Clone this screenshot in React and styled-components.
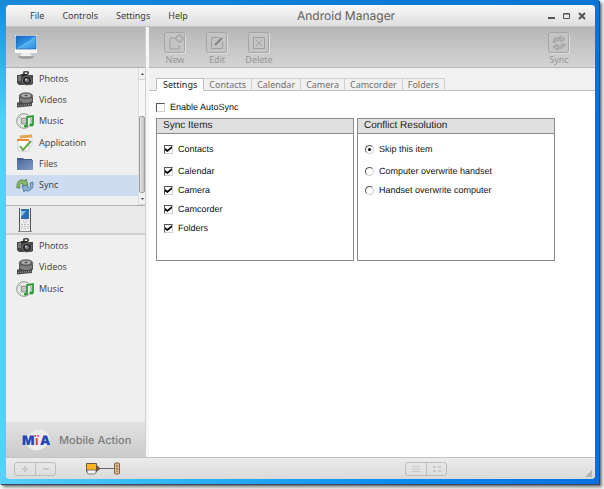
import { useState } from 'react';
import styled, { createGlobalStyle } from 'styled-components';

const GlobalStyle = createGlobalStyle`
    * {
        box-sizing: border-box;
    }

    body {
        margin: 0;
        background: #f4f4f4;
        overflow: hidden;
    }

    button, input {
        margin: 0;
        padding: 0;
        font: inherit;
        color: inherit;
    }
`;

const Screen = styled.div`
    height: 100vh;
    padding: 0 5px 5px 0;
`;

const Desktop = styled.div`
    height: 100%;
    padding: 5px 4px 5px 6px;
    background:
        linear-gradient(to bottom, rgba(10, 118, 208, 0.8), rgba(10, 118, 208, 0) 120px),
        linear-gradient(to right, #58d0f8, #2cb4f5 30%, #0c8cf0 65%, #0670e0);
    box-shadow: 1px 1px 1px #3c4858, 3px 3px 3px #777;
`;

const Window = styled.div`
    height: 100%;
    display: flex;
    flex-direction: column;
    border-radius: 4px;
    overflow: hidden;
    background: #f0f0f0;
    color: #3c3c3c;
    font-family: "Open Sans", "Noto Sans", sans-serif;
    font-size: 9px;
    line-height: 14px;
    text-rendering: geometricPrecision;
`;

const TitleBar = styled.header`
    height: 22px;
    flex: none;
    display: grid;
    grid-template-columns: 267px 1fr auto;
    align-items: center;
    padding: 0 8px 0 24px;
    background: linear-gradient(#f8f8f8, #dedede);
    border-bottom: 1px solid #c4c4c4;
`;

const Menu = styled.nav`
    display: flex;
    gap: 18px;
    font-family: "Noto Sans", sans-serif;
`;

const MenuButton = styled.button`
    border: 0;
    background: none;
`;

const Title = styled.h1`
    margin: 0;
    color: #626262;
    font-family: Inter, sans-serif;
    font-size: 12px;
    font-weight: 400;
    line-height: 16px;
`;

const WindowButtons = styled.div`
    display: flex;
    justify-content: flex-end;
    gap: 5px;
`;

const WindowButton = styled.button`
    width: 10px;
    height: 10px;
    display: flex;
    border: 0;
    background: none;
`;

const Body = styled.div`
    flex: 1;
    min-height: 0;
    display: grid;
    grid-template-columns: 140px 1fr;
    column-gap: 3px;
    background: #f6f6f6;
`;

const Sidebar = styled.aside`
    min-height: 0;
    display: flex;
    flex-direction: column;
    background: #efefef;
    border-right: 1px solid #d0d0d0;
`;

const ComputerHeader = styled.div`
    height: 41px;
    flex: none;
    display: flex;
    align-items: center;
    padding-left: 8px;
    background: linear-gradient(#b6b6b6, #d2d2d2);
    border-bottom: 1px solid #b0b0b0;
`;

const ScrollArea = styled.div`
    height: 137px;
    flex: none;
    display: flex;
`;

const List = styled.div`
    height: ${props => (props.$short ? '64px' : '128px')};
    flex: ${props => (props.$short ? 'none' : '1')};
    display: flex;
    flex-direction: column;
    justify-content: space-between;
`;

const ListItem = styled.button`
    height: 21px;
    display: flex;
    align-items: center;
    gap: 5px;
    padding-left: 10px;
    border: 0;
    background: ${props => (props.$active ? '#cddcf0' : 'none')};
    text-align: left;
`;

const ScrollBar = styled.div`
    width: 7px;
    display: flex;
    flex-direction: column;
    border-left: 1px solid #dcdcdc;
    background: #f6f6f6;
`;

const ScrollButton = styled.button`
    height: 12px;
    display: flex;
    align-items: center;
    justify-content: center;
    border: 0;
    border-bottom: 1px solid #d4d4d4;
    background: #f2f2f2;
`;

const ScrollTrack = styled.div`
    flex: 1;
    display: flex;
    align-items: flex-end;
`;

const ScrollThumb = styled.div`
    width: 100%;
    height: 68%;
    border: 1px solid #a0a0a0;
    border-radius: 2px;
    background: linear-gradient(to right, #e2e2e2, #c4c4c4);
`;

const DeviceHeader = styled.div`
    height: 30px;
    flex: none;
    display: flex;
    align-items: center;
    padding-left: 12px;
    background: #e9e9e9;
    border-top: 1px solid #b0b0b0;
    border-bottom: 2px solid #d0d0d0;
`;

const Brand = styled.div`
    height: 35px;
    flex: none;
    display: flex;
    align-items: center;
    gap: 5px;
    margin-top: auto;
    padding-left: 16px;
    background: linear-gradient(#e2e2e2, #cbcbcb);
    color: #7c7c7c;
    font-family: Inter, sans-serif;
    font-size: 11px;
    font-weight: 500;
`;

const Main = styled.main`
    min-width: 0;
    display: flex;
    flex-direction: column;
    background: #fff;
`;

const Toolbar = styled.div`
    height: 41px;
    flex: none;
    display: flex;
    gap: 12px;
    padding: 5px 21px 0 11px;
    background: linear-gradient(#b6b6b6, #d4d4d4);
    border-bottom: 1px solid #b8b8b8;
`;

const ToolButton = styled.button`
    width: 30px;
    display: flex;
    flex-direction: column;
    align-items: center;
    margin-left: ${props => (props.$last ? 'auto' : '0')};
    border: 0;
    background: none;
    color: #969696;
    font-family: "Noto Sans", sans-serif;
    line-height: 12px;
`;

const Tabs = styled.div`
    height: 23px;
    flex: none;
    display: flex;
    align-items: flex-end;
    padding-left: 7px;
    background: #f1f1f1;
    box-shadow: inset 0 -1px #c0c0c0;
`;

const Tab = styled.button`
    height: 13px;
    padding: 0 ${props => (props.$active ? '6px' : '5px')};
    border: 1px solid ${props => (props.$active ? '#bcbcbc' : '#cfcfcf')};
    border-bottom-color: ${props => (props.$active ? '#fff' : '#c0c0c0')};
    border-left-width: ${props => (props.$active ? '1px' : '0')};
    background: ${props => (props.$active ? '#fff' : '#f1f1f1')};
    color: ${props => (props.$active ? '#222' : '#707070')};
    font-family: "Noto Sans", sans-serif;
    line-height: 12px;
`;

const Content = styled.div`
    flex: 1;
    padding: 9px 40px 0 7px;
    color: #111;
    font-family: "Liberation Sans", Arial, sans-serif;
`;

const Panels = styled.div`
    display: grid;
    grid-template-columns: 1fr 1fr;
    gap: 3px;
    margin-top: 4px;
`;

const Panel = styled.fieldset`
    min-width: 0;
    min-height: 143px;
    margin: 0;
    padding: 0;
    border: 1px solid #8c8c8c;
`;

const PanelTitle = styled.h2`
    margin: 0;
    padding-left: 6px;
    background: #e0e0e0;
    border-bottom: 1px solid #8c8c8c;
    color: #222;
    font-size: 10px;
    font-weight: 400;
`;

const Options = styled.div`
    display: flex;
    flex-direction: column;
    gap: 5px;
    padding: 8px 7px;
`;

const Option = styled.label`
    display: flex;
    align-items: center;
    gap: 5px;
    margin-bottom: ${props => (props.$lead ? '3px' : '0')};
`;

const CheckBox = styled.input`
    appearance: none;
    width: 9px;
    height: 9px;
    display: grid;
    place-items: center;
    border: 1px solid #d0d0d0;
    border-top-color: #555;
    border-left-color: #555;
    background: #fff;

    &:checked::after {
        content: "";
        width: 7px;
        height: 6px;
        background: #000;
        clip-path: polygon(0 35%, 35% 62%, 100% 0, 100% 38%, 35% 100%, 0 75%);
    }
`;

const Radio = styled(CheckBox)`
    border-radius: 50%;

    &:checked::after {
        width: 3px;
        height: 3px;
        border-radius: 50%;
        clip-path: none;
    }
`;

const StatusBar = styled.footer`
    height: 22px;
    flex: none;
    display: grid;
    grid-template-columns: 72px 319px 1fr auto;
    align-items: center;
    padding: 0 2px 0 8px;
    background: linear-gradient(#ececec, #dadada);
    border-top: 1px solid #c2c2c2;
`;

const ButtonPair = styled.div`
    display: flex;
    justify-self: start;
    border: 1px solid #bdbdbd;
    border-radius: 3px;
`;

const SmallButton = styled.button`
    width: 20px;
    height: 12px;
    display: grid;
    place-items: center;
    border: 0;
    background: none;
    color: #cacaca;

    & + & {
        border-left: 1px solid #bdbdbd;
    }
`;

const PhotoIcon = () => (
    <svg width="18" height="18" viewBox="0 0 18 18">
        <path d="M7 4V2l1-1h4l1 1v2h-2V2.500H9V4z" fill="#555" />
        <path d="M1 5h3l1-1h7l1 1h4v9l-2 1H3l-2-2z" fill="#484848" />
        <path d="M2 6h3v5H2z" fill="#777" />
        <path d="M6 4h5v2H6z" fill="#282828" />
        <circle cx="11" cy="10.500" r="4.500" fill="#252525" stroke="#777" />
        <circle cx="11" cy="10.500" r="2.200" fill="#687078" />
        <circle cx="10" cy="9.500" r="1" fill="#c4ccd4" />
    </svg>
);

const VideoIcon = () => (
    <svg width="18" height="18" viewBox="0 0 18 18">
        <path d="M1 11.500l15-1v4.500L1 16.500z" fill="#4c4c4c" />
        <path d="M3 5v6c0 3 14 3 14 0V5z" fill="#4a4a4a" />
        <ellipse cx="10" cy="9" rx="6.500" ry="3" fill="#808080" />
        <ellipse cx="10" cy="5" rx="7" ry="3.500" fill="#555" stroke="#888" strokeWidth=".6" />
        <ellipse cx="10" cy="4.500" rx="4.800" ry="2" fill="#aaa" />
        <ellipse cx="10" cy="4.500" rx="1.500" ry=".7" fill="#444" />
        <path d="M2 14.500l13-1" stroke="#999" strokeDasharray="1 1" />
    </svg>
);

const MusicIcon = () => (
    <svg width="18" height="18" viewBox="0 0 18 18">
        <circle cx="8" cy="9" r="7.300" fill="#ececec" stroke="#8d938d" />
        <path d="M3 5l4 3M4 13l3-3" stroke="#b7cdb5" strokeWidth="2" />
        <circle cx="8" cy="9" r="3" fill="#d4d4d4" stroke="#888" />
        <circle cx="8" cy="9" r="1" fill="#fff" stroke="#aaa" />
        <path d="M11 14V5l6-1v9" fill="none" stroke="#319b3c" strokeWidth="1.800" />
        <ellipse cx="9.800" cy="14" rx="2" ry="1.500" fill="#319b3c" />
        <ellipse cx="15.500" cy="13" rx="2" ry="1.500" fill="#319b3c" />
    </svg>
);

const ApplicationIcon = () => (
    <svg width="18" height="18" viewBox="0 0 18 18">
        <path d="M4 2l12-1v11H4z" fill="#fafafa" stroke="#d8d8d8" />
        <path d="M4 1.500l12-1v3l-12 1z" fill="#e9a34c" />
        <path d="M2 6h11v11H2z" fill="#fff" stroke="#d0d0d0" />
        <path d="M1 5h12v2H1z" fill="#e98935" />
        <path d="M4 12l3 4 8-9" fill="none" stroke="#69a944" strokeWidth="2" />
    </svg>
);

const FilesIcon = () => (
    <svg width="18" height="18" viewBox="0 0 18 18">
        <defs>
            <linearGradient id="folder" x2="1" y2="1">
                <stop stopColor="#4d6a9c" />
                <stop offset="1" stopColor="#809bc4" />
            </linearGradient>
        </defs>
        <path d="M1 3h6l1 1h8v11H1z" fill="#435d89" />
        <path d="M1 5h16v10H1z" fill="url(#folder)" />
    </svg>
);

const SyncIcon = () => (
    <svg width="18" height="18" viewBox="0 0 18 18" strokeLinejoin="round">
        <path d="M1 12C0 5 5 2 9 5l1-2 2 6-6 1 1-2C4 6 3 9 4 12z" fill="#88b96b" stroke="#4f8148" strokeWidth=".8" />
        <path d="M17 6c1 7-4 11-8 8l-1 2-2-6 6-1-1 2c3 2 4-1 3-4z" fill="#89afd1" stroke="#4d7496" strokeWidth=".8" />
    </svg>
);

const MonitorIcon = () => (
    <svg width="24" height="26" viewBox="0 0 24 26">
        <defs>
            <linearGradient id="monitor" x2="1" y2="1">
                <stop stopColor="#1766be" />
                <stop offset=".5" stopColor="#2f91e4" />
                <stop offset=".5" stopColor="#5db4f1" />
                <stop offset="1" stopColor="#258ce0" />
            </linearGradient>
        </defs>
        <ellipse cx="12" cy="23" rx="8" ry="2" fill="#a1a1a1" />
        <path d="M8 19h8l2 3H6z" fill="#eee" />
        <path d="M1 1h22v18H1z" fill="#f8f8f8" />
        <path d="M2 2h20v13H2z" fill="url(#monitor)" stroke="#2566a6" strokeWidth=".7" />
    </svg>
);

const PhoneIcon = () => (
    <svg width="14" height="26" viewBox="0 0 14 26">
        <path d="M1 1h12v23H1z" fill="#ededed" />
        <path d="M1.500 1v23M12.500 1v23" stroke="#555" />
        <path d="M3 2h8v10H3z" fill="#2870b2" />
        <path d="M3 4h5L3 10z" fill="#8dc1e7" />
        <circle cx="7" cy="14" r="1.500" fill="#fff" stroke="#999" strokeWidth=".5" />
        <path d="M3 17.500h8M3 19.500h8M3 21.500h8" stroke="#c0c0c0" strokeDasharray="2 1" />
        <path d="M0 24.500h14" stroke="#888" />
    </svg>
);

const toolPaths = {
    New: <path d="M15 13v4H6V6h5M12 5h2V3h3v2h2v3h-2v2h-3V8h-2z" />,
    Edit: (
        <>
            <path d="M13 5.500H5.500v11h11V10" />
            <path d="M9 13l7-7" stroke="#828282" strokeWidth="2" />
        </>
    ),
    Delete: <path d="M5.500 5.500h11v11h-11zM8 8l6 6M14 8l-6 6" />,
    Sync: (
        <>
            <path d="M5 10c0-3 3-5 7-4V4l5 3-4 3V8c-3 0-4 0-5 2z" fill="#b4b4b4" />
            <path d="M17 12c0 3-3 5-7 4v2l-5-3 4-3v2c3 0 4 0 5-2z" fill="#b4b4b4" />
        </>
    ),
};

const ToolIcon = ({ name }) => (
    <svg width="22" height="22" viewBox="0 0 22 22" fill="none">
        <rect x="1.500" y="1.500" width="20" height="20" rx="2" stroke="#ddd" />
        <rect x=".5" y=".5" width="20" height="20" rx="2" fill="#c4c4c4" stroke="#a5a5a5" />
        <g stroke="#a0a0a0">{toolPaths[name]}</g>
    </svg>
);

const MiaLogo = () => (
    <svg width="32" height="22" viewBox="0 0 32 22">
        <ellipse cx="16" cy="11" rx="12" ry="10" fill="#ededed" transform="rotate(-25 16 11)" />
        <text x="0" y="16" fill="#2447b4" fontFamily="Inter, sans-serif" fontSize="13" fontWeight="900">M</text>
        <text x="13" y="16" fill="#dd3e3e" fontFamily="Inter, sans-serif" fontSize="13" fontWeight="700">ï</text>
        <text x="18" y="16" fill="#2447b4" fontFamily="Inter, sans-serif" fontSize="13" fontWeight="900">A</text>
    </svg>
);

const ConnectionIcon = () => (
    <svg width="34" height="13" viewBox="0 0 34 13">
        <path d="M10 6.500h20" stroke="#666" />
        <path d="M.5 1.500h10v8H.5z" fill="#f9b51f" stroke="#6c5944" />
        <path d="M1 8h9v3l-2 1H3l-2-1z" fill="#f2f2f2" stroke="#555" strokeWidth=".7" />
        <path d="M11 4l3 2.500-3 2.500z" fill="#8b6b45" stroke="#5c4c3a" />
        <rect x="28.500" y="1" width="5" height="11" rx="1" fill="#ddb584" stroke="#856447" />
        <path d="M31 3v7" stroke="#735e4b" strokeDasharray="2 1" />
    </svg>
);

const Arrow = ({ down }) => (
    <svg width="3" height="2" viewBox="0 0 5 3">
        <path d={down ? 'M0 0h5L2.500 3z' : 'M0 3h5L2.500 0z'} fill="#444" />
    </svg>
);

const sideIcons = {
    Photos: PhotoIcon,
    Videos: VideoIcon,
    Music: MusicIcon,
    Application: ApplicationIcon,
    Files: FilesIcon,
    Sync: SyncIcon,
};

const computerItems = ['Photos', 'Videos', 'Music', 'Application', 'Files', 'Sync'];
const deviceItems = ['Photos', 'Videos', 'Music'];
const tabs = ['Settings', 'Contacts', 'Calendar', 'Camera', 'Camcorder', 'Folders'];
const syncItems = ['Contacts', 'Calendar', 'Camera', 'Camcorder', 'Folders'];
const resolutions = ['Skip this item', 'Computer overwrite handset', 'Handset overwrite computer'];

const SideList = ({ items, active, short }) => (
    <List $short={short}>
        {items.map(name => {
            const Icon = sideIcons[name];

            return <ListItem key={name} $active={name === active}>
                <Icon />
                {name}
            </ListItem>
        })}
    </List>
);

const App = () => {
    const [tab, setTab] = useState('Settings');

    return <Screen>
        <GlobalStyle />
        <Desktop>
            <Window>
                <TitleBar>
                    <Menu>
                        {['File', 'Controls', 'Settings', 'Help'].map(name =>
                            <MenuButton key={name}>{name}</MenuButton>
                        )}
                    </Menu>
                    <Title>Android Manager</Title>
                    <WindowButtons>
                        <WindowButton aria-label="Minimize">
                            <svg width="10" height="10"><path d="M1 7h7" stroke="#555" strokeWidth="2" /></svg>
                        </WindowButton>
                        <WindowButton aria-label="Maximize">
                            <svg width="10" height="10"><path d="M1.500 2.500h6v5h-6zM2 3h6" fill="none" stroke="#555" /></svg>
                        </WindowButton>
                        <WindowButton aria-label="Close">
                            <svg width="10" height="10"><path d="M2 2l6 6M8 2l-6 6" stroke="#555" strokeWidth="2" /></svg>
                        </WindowButton>
                    </WindowButtons>
                </TitleBar>
                <Body>
                    <Sidebar>
                        <ComputerHeader><MonitorIcon /></ComputerHeader>
                        <ScrollArea>
                            <SideList items={computerItems} active="Sync" />
                            <ScrollBar>
                                <ScrollButton aria-label="Scroll up"><Arrow /></ScrollButton>
                                <ScrollTrack><ScrollThumb /></ScrollTrack>
                                <ScrollButton aria-label="Scroll down"><Arrow down /></ScrollButton>
                            </ScrollBar>
                        </ScrollArea>
                        <DeviceHeader><PhoneIcon /></DeviceHeader>
                        <SideList items={deviceItems} short />
                        <Brand>
                            <MiaLogo />
                            <span>Mobile Action</span>
                        </Brand>
                    </Sidebar>
                    <Main>
                        <Toolbar>
                            {['New', 'Edit', 'Delete', 'Sync'].map(name =>
                                <ToolButton key={name} $last={name === 'Sync'}>
                                    <ToolIcon name={name} />
                                    {name}
                                </ToolButton>
                            )}
                        </Toolbar>
                        <Tabs role="tablist">
                            {tabs.map(name =>
                                <Tab
                                    key={name}
                                    role="tab"
                                    aria-selected={name === tab}
                                    $active={name === tab}
                                    onClick={() => setTab(name)}
                                >
                                    {name}
                                </Tab>
                            )}
                        </Tabs>
                        <Content>
                            <Option>
                                <CheckBox type="checkbox" />
                                Enable AutoSync
                            </Option>
                            <Panels>
                                <Panel aria-label="Sync Items">
                                    <PanelTitle>Sync Items</PanelTitle>
                                    <Options>
                                        {syncItems.map((name, index) =>
                                            <Option key={name} $lead={index === 0}>
                                                <CheckBox type="checkbox" defaultChecked />
                                                {name}
                                            </Option>
                                        )}
                                    </Options>
                                </Panel>
                                <Panel aria-label="Conflict Resolution">
                                    <PanelTitle>Conflict Resolution</PanelTitle>
                                    <Options>
                                        {resolutions.map((name, index) =>
                                            <Option key={name} $lead={index === 0}>
                                                <Radio type="radio" name="resolution" defaultChecked={index === 0} />
                                                {name}
                                            </Option>
                                        )}
                                    </Options>
                                </Panel>
                            </Panels>
                        </Content>
                    </Main>
                </Body>
                <StatusBar>
                    <ButtonPair>
                        <SmallButton aria-label="Add">
                            <svg width="8" height="8"><path d="M4 1v6M1 4h6" stroke="currentColor" strokeWidth="2" /></svg>
                        </SmallButton>
                        <SmallButton aria-label="Remove">
                            <svg width="8" height="8"><path d="M1 4h6" stroke="currentColor" strokeWidth="2" /></svg>
                        </SmallButton>
                    </ButtonPair>
                    <ConnectionIcon />
                    <ButtonPair>
                        <SmallButton aria-label="List view">
                            <svg width="8" height="8"><path d="M0 1.500h8M0 4h8M0 6.500h8" stroke="currentColor" /></svg>
                        </SmallButton>
                        <SmallButton aria-label="Grid view">
                            <svg width="8" height="8"><path d="M0 1h3v2H0zM5 1h3v2H5zM0 5h3v2H0zM5 5h3v2H5z" fill="currentColor" /></svg>
                        </SmallButton>
                    </ButtonPair>
                    <svg width="8" height="18"><path d="M7 10v7H0z" fill="#b4b4b4" /></svg>
                </StatusBar>
            </Window>
        </Desktop>
    </Screen>
}

export default App;
